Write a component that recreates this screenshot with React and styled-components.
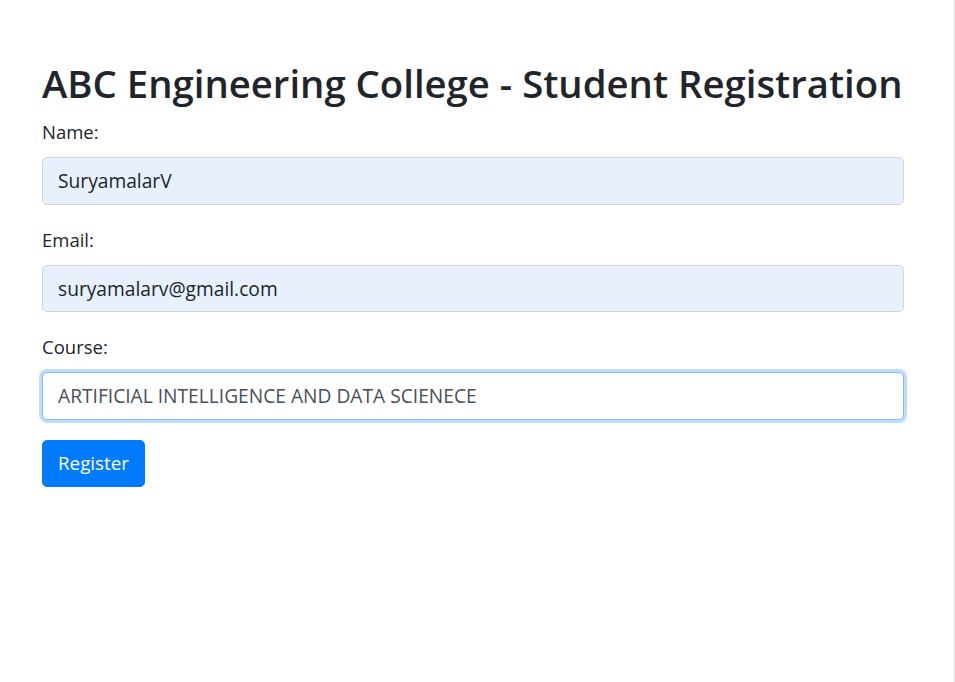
import React, { useState } from "react";
import styled, { createGlobalStyle } from "styled-components";

const GlobalStyle = createGlobalStyle`
  html, body {
    margin: 0;
    padding: 0;
    background: #fff;
  }
  body {
    font-family: "Open Sans", "Noto Sans", Arial, sans-serif;
    color: #212529;
    font-size: 20px;
    line-height: 1.5;
  }
  * { box-sizing: border-box; }
`;

const Page = styled.div`
  min-height: 100vh;
  width: 955px;
  border-right: 2px solid #ededed;
`;

const Container = styled.div`
  padding: 59px 49px 0 42px;
`;

const Title = styled.h2`
  margin: 0 0 10px;
  font-size: 38.3px;
  font-weight: 600;
  line-height: 48px;
  color: #212529;
  white-space: nowrap;
`;

const FormGroup = styled.div`
  margin-bottom: 20px;
`;

const Label = styled.label`
  display: block;
  margin-bottom: 10px;
  font-size: 18.5px;
  line-height: 30px;
  color: #212529;
`;

const Input = styled.input`
  display: block;
  width: 100%;
  height: 47.5px;
  padding: 7px 15px;
  font-family: inherit;
  font-size: 19.2px;
  line-height: 30px;
  color: ${(p) => (p.$focused ? "#495057" : "#212529")};
  background: ${(p) => (p.$autofill ? "#e8f0fe" : "#fff")};
  border: 1px solid ${(p) => (p.$focused ? "#80bdff" : "#ced4da")};
  border-radius: 5px;
  box-shadow: ${(p) => (p.$focused ? "0 0 0 3px rgba(0,123,255,.25)" : "none")};
  outline: none;
`;

const Button = styled.button`
  display: inline-block;
  height: 47.5px;
  padding: 7px 15px;
  font-family: inherit;
  font-size: 18.8px;
  line-height: 30px;
  color: #fff;
  background: #007bff;
  border: 1px solid #007bff;
  border-radius: 5px;
  cursor: pointer;
`;

const fields = [
  { id: "name", label: "Name:", value: "SuryamalarV", autofill: true },
  { id: "email", label: "Email:", value: "suryamalarv@gmail.com", autofill: true },
  { id: "course", label: "Course:", value: "ARTIFICIAL INTELLIGENCE AND DATA SCIENECE", focused: true },
];

export default function App() {
  const [values, setValues] = useState(
    Object.fromEntries(fields.map((f) => [f.id, f.value]))
  );

  return (
    <>
      <GlobalStyle />
      <Page>
        <Container>
          <Title>ABC Engineering College - Student Registration</Title>
          <form onSubmit={(e) => e.preventDefault()}>
            {fields.map((f) => (
              <FormGroup key={f.id}>
                <Label htmlFor={f.id}>{f.label}</Label>
                <Input
                  id={f.id}
                  $autofill={f.autofill}
                  $focused={f.focused}
                  value={values[f.id]}
                  onChange={(e) => setValues({ ...values, [f.id]: e.target.value })}
                />
              </FormGroup>
            ))}
            <Button type="submit">Register</Button>
          </form>
        </Container>
      </Page>
    </>
  );
}
